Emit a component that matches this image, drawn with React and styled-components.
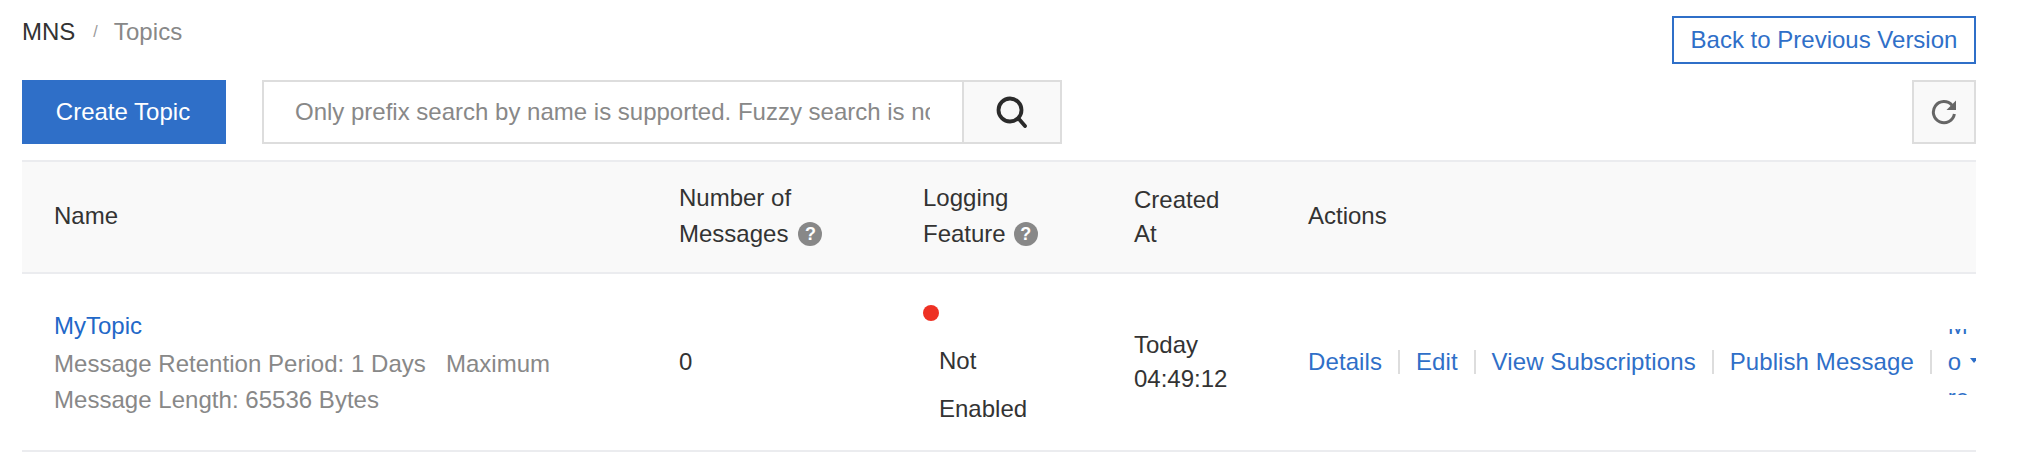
import React from "react";
import styled, { createGlobalStyle } from "styled-components";

const GlobalStyle = createGlobalStyle`
  html, body {
    margin: 0;
    padding: 0;
    background: #fff;
    font-family: "Liberation Sans", Arial, sans-serif;
  }
  * {
    box-sizing: border-box;
  }
`;

const Page = styled.div`
  width: 2018px;
  height: 474px;
  padding: 16px 42px 0 22px;
  font-size: 24px;
  color: #333;
  overflow: hidden;
`;
const TopBar = styled.div`
  display: flex;
  justify-content: space-between;
  align-items: flex-start;
  height: 48px;
`;
const Crumbs = styled.div`
  display: flex;
  align-items: center;
  height: 32px;
`;
const CrumbSep = styled.span`
  color: #999;
  font-size: 16px;
  margin: 0 16px 0 18px;
`;
const CrumbCurrent = styled.span`
  color: #888;
  letter-spacing: 0.1px;
`;
const BackButton = styled.button`
  width: 304px;
  height: 48px;
  padding: 0;
  border: 2px solid #2f6fc8;
  background: #fff;
  color: #2f6fc8;
  font: inherit;
`;
const Toolbar = styled.div`
  display: flex;
  align-items: stretch;
  height: 64px;
  margin-top: 16px;
`;
const CreateButton = styled.button`
  width: 204px;
  padding: 0 2px 0 0;
  border: 0;
  background: #2f6fc8;
  color: #fff;
  font: inherit;
`;
const SearchBox = styled.div`
  display: flex;
  width: 800px;
  margin-left: 36px;
  border: 2px solid #ddd;
`;
const SearchInput = styled.input`
  flex: 1;
  min-width: 0;
  padding: 0 32px 0 31px;
  border: 0;
  outline: 0;
  font: inherit;
  color: #333;
  &::placeholder {
    color: #888;
    opacity: 1;
  }
`;
const IconButton = styled.button`
  display: flex;
  align-items: center;
  justify-content: center;
  padding: 0;
  background: #f9f9f9;
`;
const SearchButton = styled(IconButton)`
  width: 98px;
  padding-right: 3px;
  border: 0;
  border-left: 2px solid #ddd;
`;
const RefreshButton = styled(IconButton)`
  width: 64px;
  margin-left: auto;
  border: 2px solid #ddd;
`;
const Table = styled.div`
  margin-top: 16px;
  border-top: 2px solid #ebecef;
  overflow: hidden;
`;
const Row = styled.div`
  display: grid;
  grid-template-columns: 625px 244px 211px 174px 700px;
  height: ${(p) => p.$height}px;
  padding-bottom: ${(p) => p.$pad || 0}px;
  background: ${(p) => p.$bg || "#fff"};
  border-bottom: 2px solid #ebecef;
`;
const Cell = styled.div`
  display: flex;
  flex-direction: column;
  justify-content: center;
  padding-top: ${(p) => p.$top || 0}px;
  padding-left: 32px;
  line-height: ${(p) => p.$lh || 36}px;
`;
const HeadLine = styled.div`
  display: flex;
  align-items: center;
`;
const Help = styled.span`
  display: flex;
  align-items: center;
  justify-content: center;
  width: 24px;
  height: 24px;
  margin-left: ${(p) => p.$gap || 10}px;
  border-radius: 50%;
  background: #888;
  color: #fff;
  font-size: 18px;
  font-weight: 700;
  line-height: 24px;
`;
const TopicLink = styled.a`
  color: #2268c8;
`;
const Meta = styled.div`
  width: 520px;
  margin-top: 2px;
  color: #888;
  letter-spacing: 0.03px;
`;
const StatusCell = styled(Cell)`
  justify-content: flex-start;
  padding-top: 31px;
`;
const Dot = styled.span`
  display: block;
  width: 16px;
  height: 16px;
  border-radius: 50%;
  background: #ee3124;
`;
const StatusText = styled.div`
  width: 120px;
  margin: 16px 0 0 16px;
  line-height: 48px;
`;
const Actions = styled.div`
  display: flex;
  align-items: center;
  padding-left: 32px;
`;
const ActionLink = styled.a`
  color: #2f6fc8;
  white-space: nowrap;
  letter-spacing: 0.1px;
`;
const Sep = styled.span`
  display: block;
  width: 2px;
  height: 24px;
  margin: 0 16px;
  background: #ddd;
`;
const More = styled.div`
  position: relative;
  width: 30px;
  height: 66px;
  overflow: hidden;
`;
const MoreText = styled.div`
  width: 22px;
  margin-top: -21px;
  line-height: 36px;
  color: #2f6fc8;
`;
const Caret = styled.span`
  position: absolute;
  top: 29px;
  left: 22px;
  width: 0;
  height: 0;
  border-left: 4px solid transparent;
  border-right: 4px solid transparent;
  border-top: 5px solid #2f6fc8;
`;

const SearchIcon = () => (
  <svg width="34" height="32" viewBox="0 0 34 32" fill="none" stroke="#2b2b2b" strokeWidth="3.8">
    <circle cx="16" cy="14" r="11.5" />
    <path d="M24.5 22.5L31 30" strokeLinecap="round" />
  </svg>
);

const RefreshIcon = () => (
  <svg width="26" height="26" viewBox="0 0 26 26" fill="none">
    <path d="M21 6.2A10.6 10.6 0 1 0 23.4 15" stroke="#666" strokeWidth="3" />
    <path d="M25 1.5V11H15.5Z" fill="#666" />
  </svg>
);

const App = () => {
  return (
    <>
      <GlobalStyle />
      <Page>
        <TopBar>
          <Crumbs>
            <span>MNS</span>
            <CrumbSep>/</CrumbSep>
            <CrumbCurrent>Topics</CrumbCurrent>
          </Crumbs>
          <BackButton>Back to Previous Version</BackButton>
        </TopBar>
        <Toolbar>
          <CreateButton>Create Topic</CreateButton>
          <SearchBox>
            <SearchInput
              readOnly
              placeholder="Only prefix search by name is supported. Fuzzy search is not supported."
            />
            <SearchButton>
              <SearchIcon />
            </SearchButton>
          </SearchBox>
          <RefreshButton>
            <RefreshIcon />
          </RefreshButton>
        </Toolbar>
        <Table>
          <Row $height={112} $pad={2} $bg="#f9f9f9">
            <Cell>Name</Cell>
            <Cell>
              <HeadLine>Number of</HeadLine>
              <HeadLine>
                Messages<Help>?</Help>
              </HeadLine>
            </Cell>
            <Cell>
              <HeadLine>Logging</HeadLine>
              <HeadLine>
                Feature<Help $gap={8}>?</Help>
              </HeadLine>
            </Cell>
            <Cell $lh={34} $top={2}>
              <HeadLine>Created</HeadLine>
              <HeadLine>At</HeadLine>
            </Cell>
            <Cell>Actions</Cell>
          </Row>
          <Row $height={178}>
            <Cell $top={2}>
              <TopicLink>MyTopic</TopicLink>
              <Meta>
                Message Retention Period: 1 Days&nbsp;&nbsp; Maximum Message Length: 65536 Bytes
              </Meta>
            </Cell>
            <Cell>0</Cell>
            <StatusCell>
              <Dot />
              <StatusText>Not Enabled</StatusText>
            </StatusCell>
            <Cell $lh={34}>
              <div>Today</div>
              <div>04:49:12</div>
            </Cell>
            <Actions>
              <ActionLink>Details</ActionLink>
              <Sep />
              <ActionLink>Edit</ActionLink>
              <Sep />
              <ActionLink>View Subscriptions</ActionLink>
              <Sep />
              <ActionLink>Publish Message</ActionLink>
              <Sep />
              <More>
                <MoreText>
                  M<wbr />o<wbr />re
                </MoreText>
                <Caret />
              </More>
            </Actions>
          </Row>
        </Table>
      </Page>
    </>
  );
};

export default App;
